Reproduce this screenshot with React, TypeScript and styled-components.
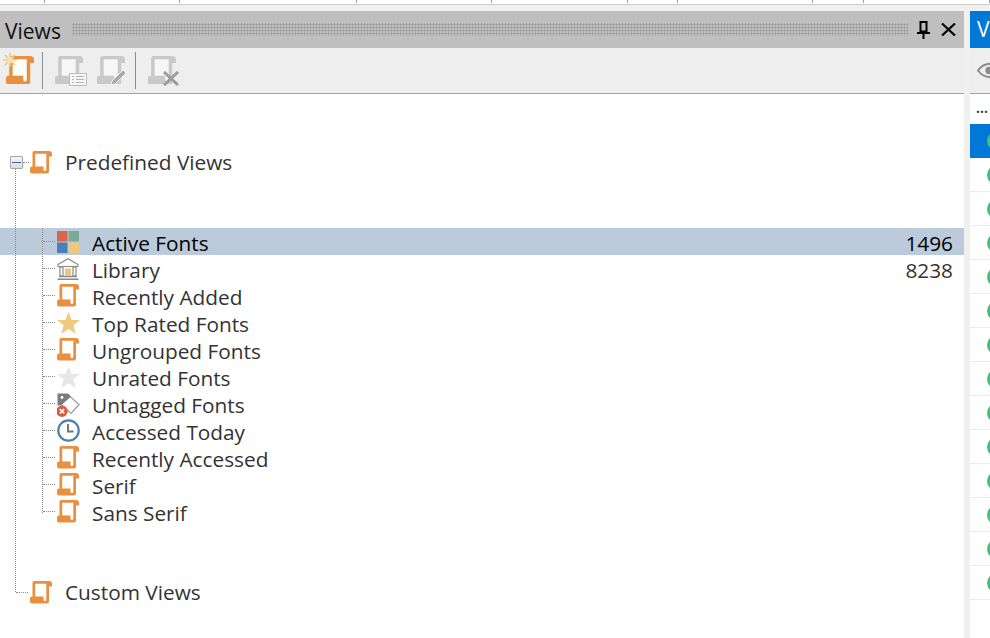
import React from "react";
import styled, { createGlobalStyle } from "styled-components";

const GlobalStyle = createGlobalStyle`
html, body {
    margin: 0;
    padding: 0;
    background: #f0f0f0;
    overflow: hidden;
}
* {
    box-sizing: border-box;
}
`

const orange = "#e8903f"
const SCROLL = "M4 0H19a3 3 0 0 1 3 3v2.5h-3V20a2.5 2.5 0 0 1-2.5 2.5H2a2 2 0 0 1-2-2v-3a2 2 0 0 1 2-2h.5V1.5A1.5 1.5 0 0 1 4 0ZM5.2 2.6V15.5H13.5V18.5q0 1.5 1.5 1.5q1.3 0 1.3-1.5V2.6Z"

const ScrollIcon = ({ size = 22, color = orange, paper = "#fff" }: { size?: number; color?: string; paper?: string }) => (
    <svg width={size} height={size * 1.03} viewBox="0 0 22 22.6">
        <path d="M5 2.5H17V20H14V15.5H5Z" fill={paper} />
        <path d={SCROLL} fill={color} fillRule="evenodd" />
    </svg>
)

const ToolIcon = styled.div`
position: relative;
width: 32px;
height: 32px;
flex: none;
display: flex;
margin-right: ${p => p.$gap || 0}px;
`

const Overlay = styled.svg`
position: absolute;
left: ${p => p.$x}px;
top: ${p => p.$y}px;
`

const NewView = () => (
    <ToolIcon>
        <ScrollIcon size={28} />
        <Overlay $x={-3} $y={-3} width="14" height="14" viewBox="0 0 14 14">
            <g stroke="#eec77d" strokeWidth="1.6">
                <path d="M7 0V14M0 7H14M2 2L12 12M12 2L2 12" />
            </g>
            <circle cx="7" cy="7" r="3.4" fill="#f6dfa8" />
        </Overlay>
    </ToolIcon>
)

const ListView = () => (
    <ToolIcon $gap={10}>
        <ScrollIcon size={28} color="#c9c9c9" paper="#f6f6f6" />
        <Overlay $x={14} $y={17} width="18" height="13" viewBox="0 0 18 13">
            <rect x="0.5" y="0.5" width="17" height="12" fill="#f6f6f6" stroke="#bdbdbd" />
            <path d="M3 3.5H5M7 3.5H15M3 6.5H5M7 6.5H15M3 9.5H5M7 9.5H15" stroke="#b5b5b5" />
        </Overlay>
    </ToolIcon>
)

const EditView = () => (
    <ToolIcon $gap={2}>
        <ScrollIcon size={28} color="#c9c9c9" paper="#f6f6f6" />
        <Overlay $x={13} $y={11} width="18" height="19" viewBox="0 0 18 19">
            <path d="M2 14L13 3L16 6L5 17L1 18Z" fill="#a9a9a9" stroke="#f0f0f0" />
        </Overlay>
    </ToolIcon>
)

const DeleteView = () => (
    <ToolIcon>
        <ScrollIcon size={28} color="#c9c9c9" paper="#f6f6f6" />
        <Overlay $x={15} $y={15} width="16" height="15" viewBox="0 0 16 15">
            <path d="M1 1L15 14M15 1L1 14" stroke="#9c9c9c" strokeWidth="3" />
        </Overlay>
    </ToolIcon>
)

const FontsIcon = () => (
    <svg width="22" height="22" viewBox="0 0 22 22">
        <rect x="0" y="0" width="10.5" height="10.5" fill="#dd6447" />
        <rect x="11.5" y="0" width="10.5" height="10.5" fill="#78ac97" />
        <rect x="0" y="11.5" width="10.5" height="10.5" fill="#4a80b8" />
        <rect x="11.5" y="11.5" width="10.5" height="10.5" fill="#eec77d" />
    </svg>
)

const LibraryIcon = () => (
    <svg width="22" height="22" viewBox="0 0 22 22" fill="none" stroke="#8a8a8a" strokeWidth="1.2">
        <path d="M1 6.5L11 0.8L21 6.5V8.5H1Z" />
        <rect x="3" y="9" width="3" height="9" />
        <rect x="16" y="9" width="3" height="9" />
        <path d="M2 18.5H20M0.5 21.2H21.5" strokeWidth="1.4" />
        <rect x="8" y="10.5" width="6" height="7.5" fill="#eec77d" stroke="none" />
    </svg>
)

const StarIcon = ({ color }: { color: string }) => (
    <svg width="23" height="22" viewBox="0 0 23 22">
        <path d="M11.5 0L14.6 8H23L16.4 13.2L18.7 22L11.5 17L4.3 22L6.6 13.2L0 8H8.4Z" fill={color} />
    </svg>
)

const TagIcon = () => (
    <svg width="24" height="26" viewBox="0 0 24 26">
        <g transform="translate(0 2.5)">
            <path d="M2 1H11L22 11L14 20L3 10Z" fill="#fff" stroke="#9a9a9a" strokeWidth="1.2" />
            <path d="M0.5 0H11L14 3L4 12H0.5Z" fill="#7c7c7c" />
            <circle cx="5" cy="4" r="1.4" fill="#fff" />
        </g>
        <circle cx="5" cy="20.2" r="5.7" fill="#dd5a3f" />
        <path d="M2.8 18L7.2 22.4M7.2 18L2.8 22.4" stroke="#fff" strokeWidth="1.7" />
    </svg>
)

const ClockIcon = () => (
    <svg width="23" height="23" viewBox="0 0 23 23" fill="none">
        <circle cx="11.5" cy="11.5" r="10.2" stroke="#4a80b8" strokeWidth="2.2" />
        <path d="M11 5V12.5H16.5" stroke="#777" strokeWidth="2" />
    </svg>
)

const views = [
    { name: "Active Fonts", icon: <FontsIcon />, count: "1496", active: true },
    { name: "Library", icon: <LibraryIcon />, count: "8238" },
    { name: "Recently Added", icon: <ScrollIcon /> },
    { name: "Top Rated Fonts", icon: <StarIcon color="#f0c97f" /> },
    { name: "Ungrouped Fonts", icon: <ScrollIcon /> },
    { name: "Unrated Fonts", icon: <StarIcon color="#e6e6e6" /> },
    { name: "Untagged Fonts", icon: <TagIcon /> },
    { name: "Accessed Today", icon: <ClockIcon /> },
    { name: "Recently Accessed", icon: <ScrollIcon /> },
    { name: "Serif", icon: <ScrollIcon /> },
    { name: "Sans Serif", icon: <ScrollIcon /> },
]

const ticks = [45, 135, 177, 135, 136, 50, 135, 51, 126]
const fontRows = Array.from({ length: 14 })

const App = () => {
    return (
        <Page>
            <GlobalStyle />
            <Ruler>
                {ticks.map((w, i) => <RulerCell key={i} $w={w} />)}
            </Ruler>
            <Dock>
                <ViewsPanel>
                    <TitleBar>
                        <Title>Views</Title>
                        <Grip />
                        <svg width="13" height="18" viewBox="0 0 13 18">
                            <path d="M3.5 1H9.5V10.5H3.5Z" fill="none" stroke="#000" strokeWidth="2" />
                            <path d="M0 11H13V13H0ZM5.5 13H7.5V18H5.5Z" fill="#000" />
                        </svg>
                        <svg width="15" height="13" viewBox="0 0 15 13" style={{ marginLeft: 11 }}>
                            <path d="M1 0.5L14 12.5M14 0.5L1 12.5" stroke="#000" strokeWidth="2.2" />
                        </svg>
                    </TitleBar>
                    <Toolbar>
                        <NewView />
                        <ToolSep />
                        <ListView />
                        <EditView />
                        <ToolSep />
                        <DeleteView />
                    </Toolbar>
                    <Tree>
                        <RootRow>
                            <Expander />
                            <ScrollIcon />
                            <RootLabel>Predefined Views</RootLabel>
                        </RootRow>
                        <ViewList>
                            {views.map(v => (
                                <ViewRow key={v.name} $active={v.active}>
                                    <ViewIcon>{v.icon}</ViewIcon>
                                    <ViewName $active={v.active}>{v.name}</ViewName>
                                    {v.count && <ViewCount $active={v.active}>{v.count}</ViewCount>}
                                </ViewRow>
                            ))}
                        </ViewList>
                        <CustomRow>
                            <ScrollIcon />
                            <RootLabel>Custom Views</RootLabel>
                        </CustomRow>
                    </Tree>
                </ViewsPanel>
                <SidePanel>
                    <SideTitle>V</SideTitle>
                    <SideToolbar>
                        <svg width="14" height="17" viewBox="0 0 14 17" fill="none">
                            <path d="M1 8.5Q8 -1 20 2V15Q8 18 1 8.5Z" stroke="#8c8c8c" strokeWidth="2" />
                            <circle cx="13" cy="8.5" r="4" fill="#8c8c8c" />
                        </svg>
                    </SideToolbar>
                    <SideList>
                        <SideHead>...</SideHead>
                        {fontRows.map((_, i) => (
                            <FontRow key={i} $selected={i === 0}>
                                <FontDot />
                            </FontRow>
                        ))}
                    </SideList>
                </SidePanel>
            </Dock>
        </Page>
    )
}

export default App;

const Page = styled.div`
width: 990px;
height: 638px;
display: flex;
flex-direction: column;
overflow: hidden;
font-family: "Open Sans", "Noto Sans", sans-serif;
`
const Ruler = styled.div`
height: 5px;
display: flex;
background: #fff;
border-bottom: 1px solid #cbcbcb;
`
const RulerCell = styled.div`
width: ${p => p.$w}px;
height: 3px;
border-right: 1px solid #a0a0a0;
`
const Dock = styled.div`
flex: 1;
min-height: 0;
display: flex;
gap: 6px;
padding-top: 6px;
background: #f0f0f0;
`
const ViewsPanel = styled.div`
width: 964px;
display: flex;
flex-direction: column;
background: #fff;
`
const TitleBar = styled.div`
height: 37px;
flex: none;
display: flex;
align-items: center;
padding: 0 8px 0 5px;
background: #bfbfbf;
`
const Title = styled.div`
font-size: 21px;
color: #111;
width: 67px;
padding-top: 2px;
`
const Grip = styled.div`
flex: 1;
height: 13px;
margin-right: 9px;
background-color: #bfbfbf;
background-image: radial-gradient(circle, #949494 0.9px, transparent 1.1px);
background-size: 3px 3px;
`
const Toolbar = styled.div`
height: 46px;
flex: none;
display: flex;
align-items: center;
padding: 2px 0 0 6px;
background: #eeeeee;
border-bottom: 1px solid #a3a3a3;
`
const ToolSep = styled.div`
width: 1px;
height: 37px;
margin: -2px 12px 0 4px;
background: #8e8e8e;
`
const Tree = styled.div`
position: relative;
flex: 1;
min-height: 0;
padding-top: 55px;
background: #fff;

&::before {
    content: "";
    position: absolute;
    left: 15px;
    top: 75px;
    height: 423px;
    border-left: 1px dotted #8a8a8a;
    z-index: 1;
}
`
const RootRow = styled.div`
height: 27px;
display: flex;
align-items: center;
padding-left: 10px;
`
const Expander = styled.div`
position: relative;
width: 13px;
height: 13px;
margin-right: 7px;
border: 1px solid #a8a8a8;
border-radius: 1px;
background: linear-gradient(#f6f6f6, #dcdcdc);

&::before {
    content: "";
    position: absolute;
    left: 1px;
    top: 5px;
    width: 9px;
    height: 1px;
    background: #3f5f9f;
}
&::after {
    content: "";
    position: absolute;
    left: 12px;
    top: 5px;
    width: 6px;
    border-top: 1px dotted #8a8a8a;
}
`
const RootLabel = styled.div`
margin-left: 13px;
margin-top: -2px;
font-size: 20.8px;
color: #333;
`
const ViewList = styled.div`
position: relative;
margin-top: 52px;
display: flex;
flex-direction: column;

&::before {
    content: "";
    position: absolute;
    left: 42px;
    top: 0;
    height: 285px;
    border-left: 1px dotted #8a8a8a;
    z-index: 1;
}
`
const ViewRow = styled.div`
position: relative;
height: 27px;
display: flex;
align-items: center;
padding: 0 11px 0 57px;
background: ${p => (p.$active ? "#bccbdb" : "transparent")};

&::before {
    content: "";
    position: absolute;
    left: 43px;
    top: 13px;
    width: 12px;
    border-top: 1px dotted #8a8a8a;
}
`
const ViewIcon = styled.div`
width: 35px;
height: 24px;
flex: none;
display: flex;
align-items: center;
`
const ViewName = styled.div`
flex: 1;
padding-top: 2px;
font-size: 20.8px;
color: ${p => (p.$active ? "#000" : "#333")};
`
const ViewCount = styled.div`
padding-top: 2px;
font-size: 20.8px;
color: ${p => (p.$active ? "#000" : "#333")};
`
const CustomRow = styled.div`
position: relative;
height: 27px;
margin-top: 54px;
display: flex;
align-items: center;
padding-left: 30px;

&::before {
    content: "";
    position: absolute;
    left: 16px;
    top: 13px;
    width: 12px;
    border-top: 1px dotted #8a8a8a;
}
`
const SidePanel = styled.div`
flex: 1;
min-width: 0;
display: flex;
flex-direction: column;
overflow: hidden;
background: #fff;
`
const SideTitle = styled.div`
height: 37px;
flex: none;
padding-left: 7px;
font-size: 21px;
line-height: 37px;
color: #fff;
background: #0078d7;
`
const SideToolbar = styled.div`
height: 46px;
flex: none;
display: flex;
align-items: center;
padding: 0 0 0 7px;
background: #eeeeee;
border-bottom: 1px solid #a3a3a3;
`
const SideList = styled.div`
flex: 1;
min-height: 0;
overflow: hidden;
`
const SideHead = styled.div`
height: 30px;
padding: 4px 0 0 6px;
font-size: 14px;
font-weight: 700;
line-height: 20px;
color: #444;
`
const FontRow = styled.div`
height: 34px;
display: flex;
align-items: center;
padding-left: 17px;
overflow: hidden;
background: ${p => (p.$selected ? "#0078d7" : "#fff")};
border-bottom: 1px solid ${p => (p.$selected ? "#0078d7" : "#ececec")};
`
const FontDot = styled.div`
width: 20px;
height: 20px;
flex: none;
border-radius: 50%;
background: #3fc07f;
`
